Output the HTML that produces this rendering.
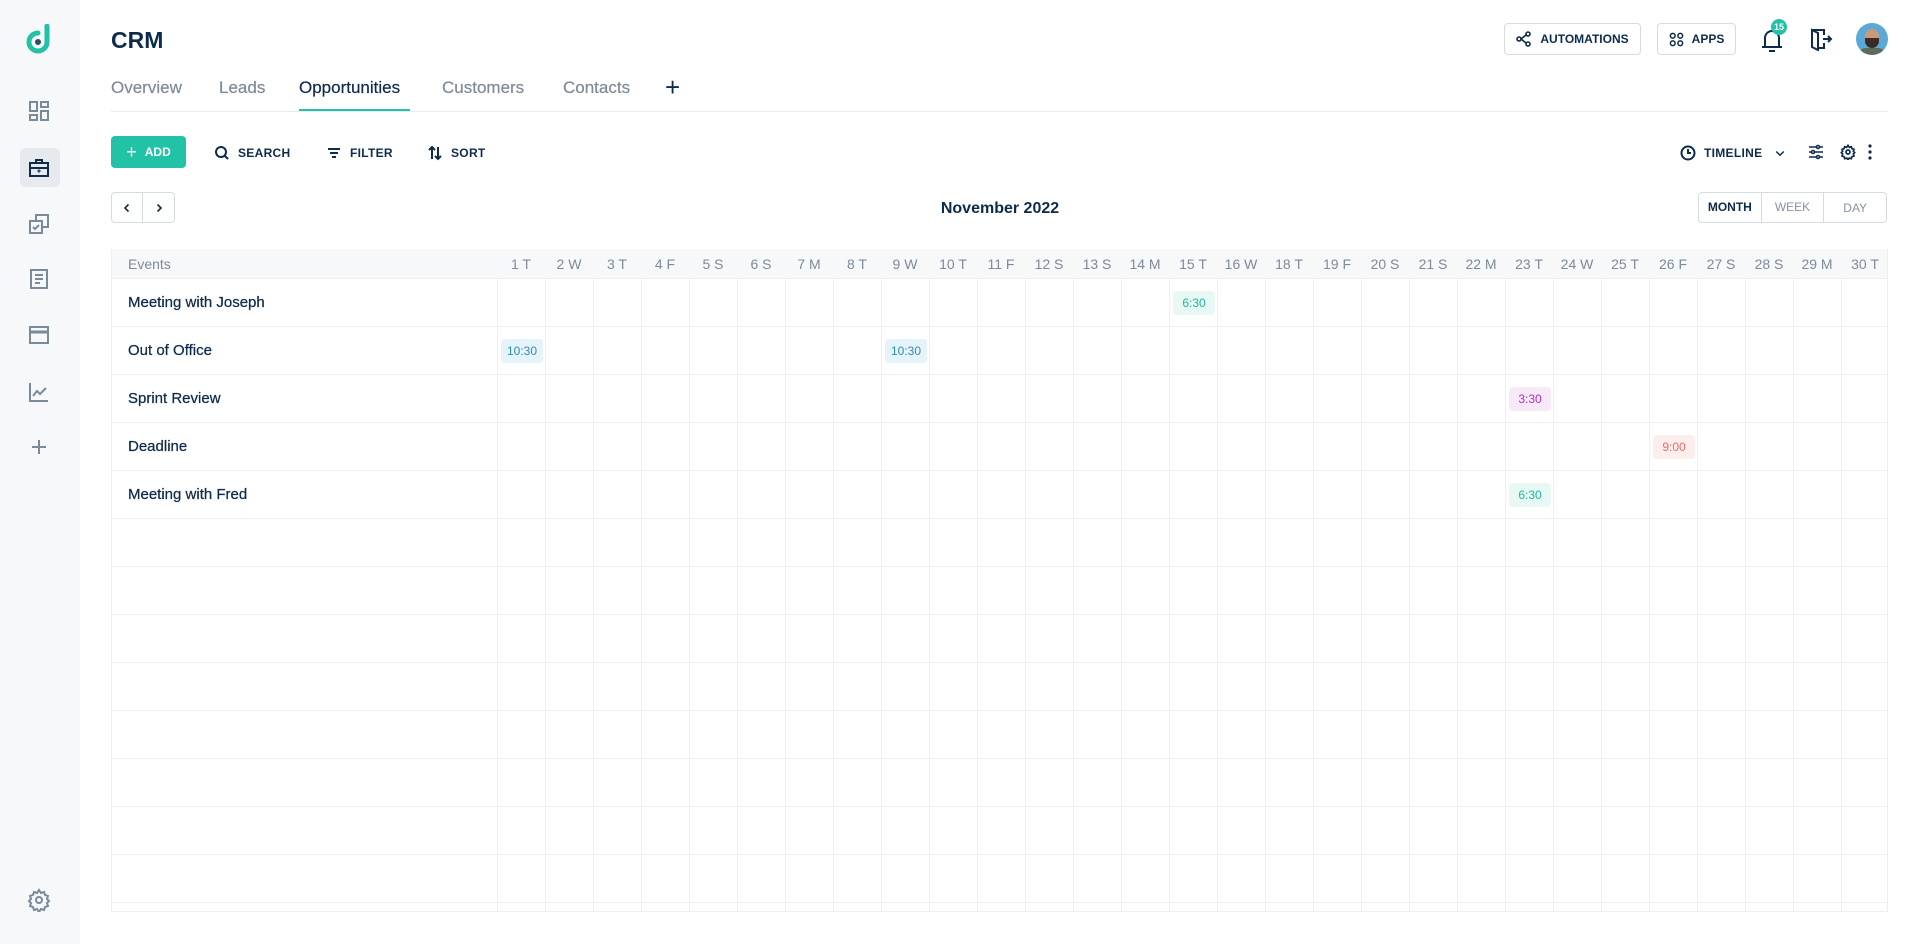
<!DOCTYPE html>
<html><head><meta charset="utf-8">
<style>
*{box-sizing:border-box;margin:0;padding:0}
body{width:1920px;height:944px;background:#fff;font-family:"Liberation Sans",sans-serif;color:#0d2b4b;position:relative;overflow:hidden}
.side{position:absolute;left:0;top:0;width:80px;height:944px;background:#f6f8fa}
.ic{position:absolute;left:27px;width:24px;height:24px}
.ic svg{width:24px;height:24px;fill:none;stroke:#7b8a9b;stroke-width:2}
.abs{position:absolute}
.tab{position:absolute;top:78px;font-size:17px;color:#7d8a99;-webkit-text-stroke:.2px}
.tb{position:absolute;top:145px;font-size:12px;font-weight:bold;letter-spacing:.3px;display:flex;align-items:center;gap:8px}
.tb svg{width:16px;height:16px;fill:none;stroke:#0d2b4b;stroke-width:2}
.btn{position:absolute;border:1px solid #d5dbe1;border-radius:4px;background:#fff;display:flex;align-items:center;justify-content:center;font-size:12px;font-weight:bold}
.grid{position:absolute;left:111px;top:249px;width:1777px;height:663px;overflow:hidden;border-left:1px solid #eceff2;border-right:1px solid #eceff2;border-bottom:1px solid #eceff2}
.hdr{height:30px;background:#f6f8fa;display:flex;font-size:14px;color:#7d8a99;border-bottom:1px solid #eceff2}
.hdr div{width:48px;text-align:center;line-height:30px;flex:none}
.hdr .ev{width:385px;text-align:left;padding-left:16px}
.row{height:48px;display:flex;border-bottom:1px solid #eef0f2}
.row div{width:48px;border-left:1px solid #eef0f2;flex:none;position:relative}
.row .ev{width:385px;border-left:none;font-size:15px;line-height:48px;padding-left:16px;color:#0d2b4b;-webkit-text-stroke:.25px}
.chip{position:absolute;left:3px;top:12px;width:42px;height:24px;border-radius:4px;font-size:12px;line-height:24px;text-align:center}
.t{background:#e8f8f4;color:#1fb59a}.b{background:#e6f3f8;color:#2a8fb5}.p{background:#f7e9f8;color:#b52ec0}.r{background:#fdeeee;color:#ef6a6a}
</style></head><body>
<div class="side">
 <svg class="abs" style="left:26px;top:24px" width="28" height="32" viewBox="0 0 28 32"><path d="M21 2v16a9 9 0 1 1-9-9" fill="none" stroke="#22c2a6" stroke-width="5" stroke-linecap="round"/><circle cx="12" cy="18" r="3" fill="#2f4a6b"/></svg>
 <div class="ic" style="top:99px"><svg viewBox="0 0 24 24"><rect x="3" y="3" width="7" height="9"/><rect x="14" y="3" width="7" height="5"/><rect x="14" y="12" width="7" height="9"/><rect x="3" y="16" width="7" height="5"/></svg></div>
 <div class="abs" style="left:20px;top:148px;width:40px;height:39px;background:#e6eaee;border-radius:5px"></div>
 <div class="ic" style="top:156px"><svg viewBox="0 0 24 24" style="stroke:#0d2b4b"><rect x="3" y="7" width="18" height="13"/><path d="M9 7V4h6v3M3 12h18"/><circle cx="12" cy="15" r=".5"/></svg></div>
 <div class="ic" style="top:212px"><svg viewBox="0 0 24 24"><rect x="3" y="9" width="12" height="12"/><path d="M9 9V3h12v12h-6M6 15l2 2 4-4"/></svg></div>
 <div class="ic" style="top:267px"><svg viewBox="0 0 24 24"><rect x="4" y="3" width="16" height="18"/><path d="M8 8h8M8 12h8M8 16h5"/></svg></div>
 <div class="ic" style="top:323px"><svg viewBox="0 0 24 24"><rect x="3" y="4" width="18" height="16"/><path d="M3 9h18" stroke-width="3"/></svg></div>
 <div class="ic" style="top:380px"><svg viewBox="0 0 24 24"><path d="M3 3v18h18M6 16l4-5 3 3 6-6"/></svg></div>
 <div class="ic" style="top:435px"><svg viewBox="0 0 24 24"><path d="M12 5v14M5 12h14"/></svg></div>
 <div class="ic" style="top:888px"><svg viewBox="0 0 24 24"><circle cx="12" cy="12" r="3"/><path d="M12 2l2 3 3-1 1 3 3 1-1 3 2 2-2 2 1 3-3 1-1 3-3-1-2 3-2-3-3 1-1-3-3-1 1-3-2-2 2-2-1-3 3-1 1-3 3 1z"/></svg></div>
</div>

<div class="abs" style="left:111px;top:27px;font-size:23px;font-weight:bold">CRM</div>
<div class="tab" style="left:111px">Overview</div>
<div class="tab" style="left:219px">Leads</div>
<div class="tab" style="left:299px;color:#0d2b4b">Opportunities</div>
<div class="tab" style="left:442px">Customers</div>
<div class="tab" style="left:563px">Contacts</div>
<div class="abs" style="left:665px;top:72px;font-size:26px;color:#0d2b4b">+</div>
<div class="abs" style="left:111px;top:111px;width:1777px;height:1px;background:#e9ecef"></div>
<div class="abs" style="left:299px;top:109px;width:111px;height:2px;background:#22c2a6"></div>

<div class="btn" style="left:1504px;top:23px;width:137px;height:32px"><svg width="16" height="16" viewBox="0 0 16 16" fill="none" stroke="#0d2b4b" stroke-width="1.6" style="margin-right:8px"><circle cx="3" cy="8" r="2"/><circle cx="12" cy="3" r="2"/><circle cx="12" cy="13" r="2"/><path d="M5 8l5-4M5 8l5 4"/></svg>AUTOMATIONS</div>
<div class="btn" style="left:1657px;top:23px;width:79px;height:32px"><svg width="15" height="15" viewBox="0 0 16 16" fill="none" stroke="#0d2b4b" stroke-width="1.6" style="margin-right:8px"><circle cx="4" cy="4" r="2.5"/><circle cx="12" cy="4" r="2.5"/><circle cx="4" cy="12" r="2.5"/><circle cx="12" cy="12" r="2.5"/></svg>APPS</div>
<svg class="abs" style="left:1760px;top:27px" width="24" height="26" viewBox="0 0 24 26" fill="none" stroke="#0d2b4b" stroke-width="2"><path d="M5 20V11a7 7 0 0 1 14 0v9M2 20h20M9 24h6"/></svg>
<div class="abs" style="left:1771px;top:19px;width:16px;height:16px;border-radius:50%;background:#22c2a6;color:#fff;font-size:9px;font-weight:bold;text-align:center;line-height:16px">15</div>
<svg class="abs" style="left:1809px;top:27px" width="24" height="24" viewBox="0 0 24 24" fill="none" stroke="#0d2b4b" stroke-width="2"><path d="M3 3h12v5M15 16v5H9M3 3l6 3v17l-6-3z"/><path d="M14 12h8M19 9l3 3-3 3"/></svg>
<div class="abs" style="left:1856px;top:23px;width:32px;height:32px;border-radius:50%;background:#5aa9d6;overflow:hidden"><div style="position:absolute;left:9px;top:6px;width:14px;height:18px;border-radius:7px;background:#c99a7a"></div><div style="position:absolute;left:9px;top:15px;width:14px;height:10px;border-radius:0 0 7px 7px;background:#3a2a22"></div><div style="position:absolute;left:4px;top:25px;width:24px;height:10px;border-radius:8px;background:#5f6b5a"></div></div>

<div class="abs" style="left:111px;top:136px;width:75px;height:32px;background:#22c2a6;border-radius:4px;color:#fff;font-size:12px;font-weight:bold;display:flex;align-items:center;justify-content:center;gap:8px"><span style="font-size:18px;font-weight:normal">+</span>ADD</div>
<div class="tb" style="left:214px"><svg viewBox="0 0 16 16"><circle cx="7" cy="7" r="5"/><path d="M11 11l3 3"/></svg>SEARCH</div>
<div class="tb" style="left:326px"><svg viewBox="0 0 16 16"><path d="M2 4h12M4 8h8M6 12h4"/></svg>FILTER</div>
<div class="tb" style="left:427px"><svg viewBox="0 0 16 16"><path d="M5 14V2M2 5l3-3 3 3M11 2v12M8 11l3 3 3-3"/></svg>SORT</div>
<div class="tb" style="left:1680px"><svg viewBox="0 0 16 16"><circle cx="8" cy="8" r="6.5"/><path d="M8 4v4h3"/></svg>TIMELINE<svg viewBox="0 0 16 16" style="margin-left:4px;width:12px"><path d="M3 6l5 5 5-5"/></svg></div>
<svg class="abs" style="left:1808px;top:144px" width="16" height="16" viewBox="0 0 16 16" fill="none" stroke="#0d2b4b" stroke-width="1.6"><path d="M1 3h14M1 8h14M1 13h14"/><circle cx="10" cy="3" r="1.5" fill="#fff"/><circle cx="5" cy="8" r="1.5" fill="#fff"/><circle cx="10" cy="13" r="1.5" fill="#fff"/></svg>
<svg class="abs" style="left:1840px;top:144px" width="16" height="16" viewBox="0 0 24 24" fill="none" stroke="#0d2b4b" stroke-width="2.5"><circle cx="12" cy="12" r="3"/><path d="M12 2l2 3 3-1 1 3 3 1-1 3 2 2-2 2 1 3-3 1-1 3-3-1-2 3-2-3-3 1-1-3-3-1 1-3-2-2 2-2-1-3 3-1 1-3 3 1z"/></svg>
<svg class="abs" style="left:1867px;top:144px" width="6" height="16" viewBox="0 0 6 16" fill="#0d2b4b"><circle cx="3" cy="2" r="1.6"/><circle cx="3" cy="8" r="1.6"/><circle cx="3" cy="14" r="1.6"/></svg>

<div class="btn" style="left:111px;top:192px;width:64px;height:31px;justify-content:flex-start"><div style="width:31px;height:29px;border-right:1px solid #d5dbe1;display:flex;align-items:center;justify-content:center"><svg width="10" height="10" viewBox="0 0 10 10" fill="none" stroke="#0d2b4b" stroke-width="1.6"><path d="M6.5 1.5L3 5l3.5 3.5"/></svg></div><div style="width:31px;display:flex;align-items:center;justify-content:center"><svg width="10" height="10" viewBox="0 0 10 10" fill="none" stroke="#0d2b4b" stroke-width="1.6"><path d="M3.5 1.5L7 5 3.5 8.5"/></svg></div></div>
<div class="abs" style="left:880px;top:200px;width:240px;text-align:center;font-size:16px;font-weight:bold">November 2022</div>
<div class="btn" style="left:1698px;top:192px;width:189px;height:31px;justify-content:flex-start;font-size:12px"><div style="width:63px;height:29px;line-height:29px;text-align:center;border-right:1px solid #d5dbe1">MONTH</div><div style="width:63px;height:29px;line-height:29px;text-align:center;border-right:1px solid #d5dbe1;color:#8592a0;font-weight:normal">WEEK</div><div style="width:62px;text-align:center;color:#8592a0;font-weight:normal">DAY</div></div>

<div class="grid">
<div class="hdr"><div class="ev">Events</div><div>1 T</div><div>2 W</div><div>3 T</div><div>4 F</div><div>5 S</div><div>6 S</div><div>7 M</div><div>8 T</div><div>9 W</div><div>10 T</div><div>11 F</div><div>12 S</div><div>13 S</div><div>14 M</div><div>15 T</div><div>16 W</div><div>18 T</div><div>19 F</div><div>20 S</div><div>21 S</div><div>22 M</div><div>23 T</div><div>24 W</div><div>25 T</div><div>26 F</div><div>27 S</div><div>28 S</div><div>29 M</div><div>30 T</div></div>
<div id="rows"></div>
</div>
<script>
var ev=[["Meeting with Joseph",{14:["t","6:30"]}],["Out of Office",{0:["b","10:30"],8:["b","10:30"]}],["Sprint Review",{21:["p","3:30"]}],["Deadline",{24:["r","9:00"]}],["Meeting with Fred",{21:["t","6:30"]}]];
var h="";for(var r=0;r<14;r++){var e=ev[r]||["",{}];h+='<div class="row"><div class="ev">'+e[0]+'</div>';for(var c=0;c<29;c++){var x=e[1][c];h+='<div>'+(x?'<span class="chip '+x[0]+'">'+x[1]+'</span>':'')+'</div>';}h+='</div>';}
document.getElementById("rows").innerHTML=h;
</script>
</body></html>
